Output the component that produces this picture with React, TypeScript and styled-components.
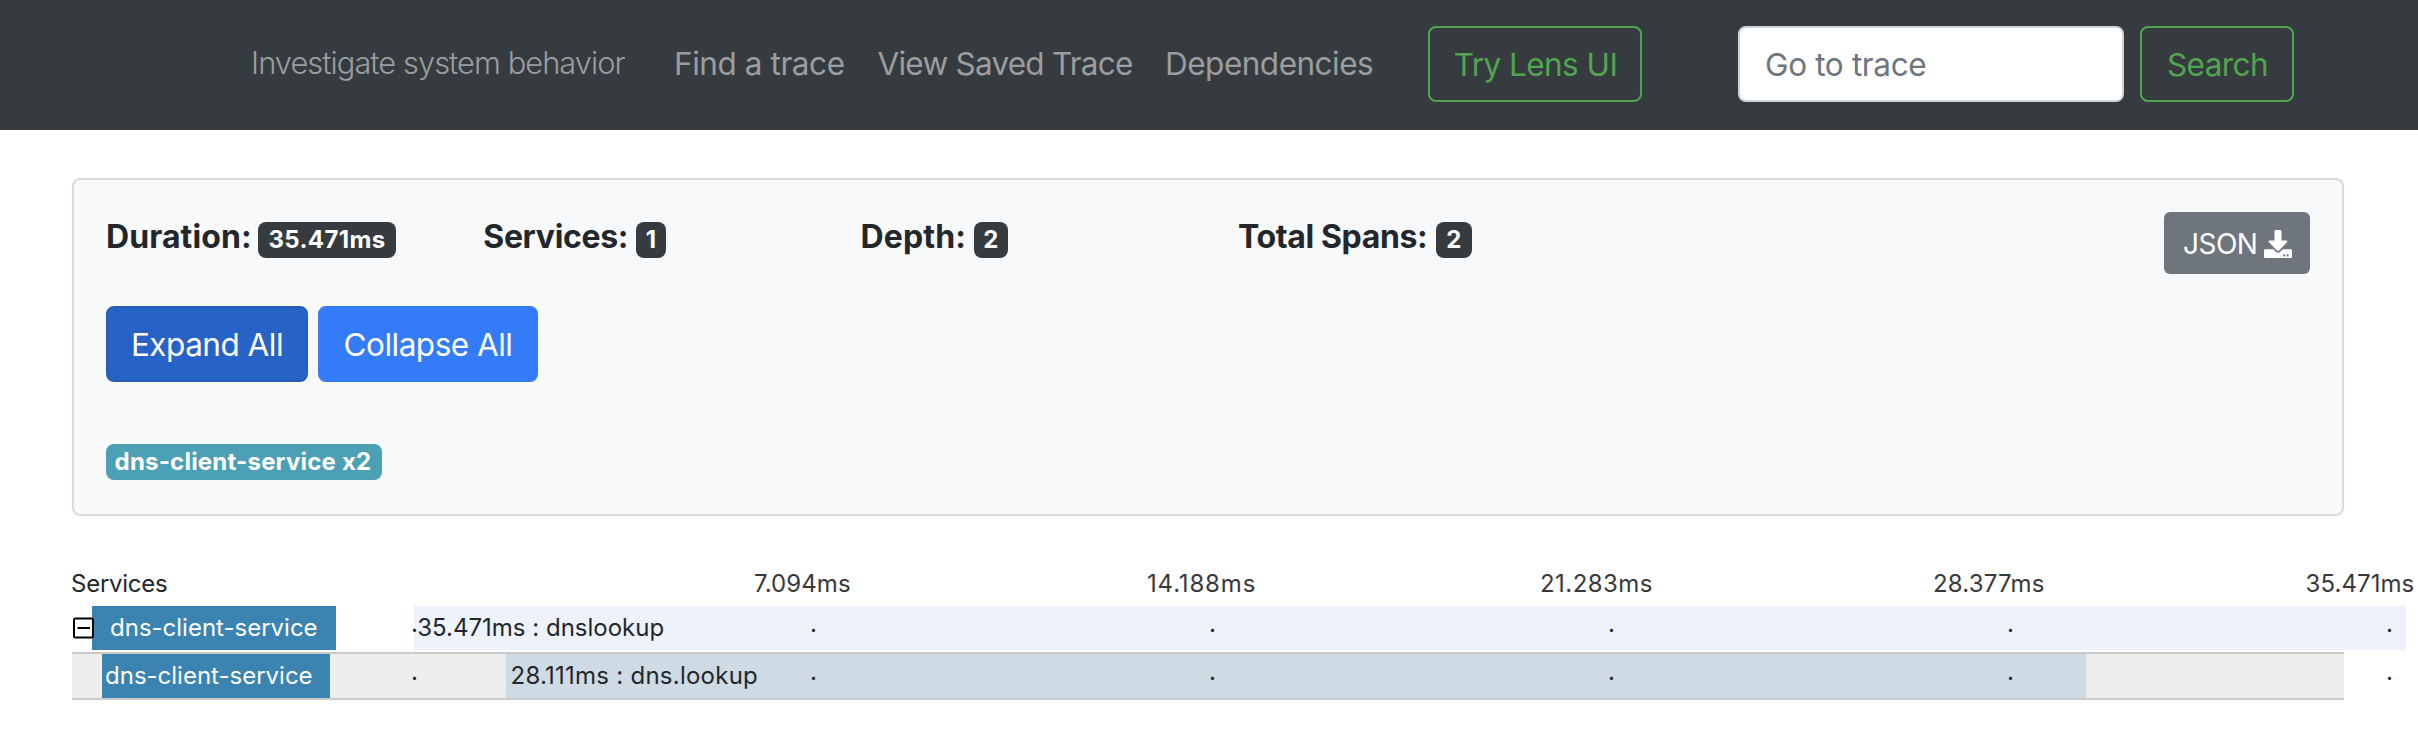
import React from 'react';
import styled, { createGlobalStyle, css } from 'styled-components';
import { FaDownload } from 'react-icons/fa';

const GlobalStyle = createGlobalStyle`
  *, *::before, *::after { box-sizing: border-box; }
  html { overflow: hidden; }
  body {
    margin: 0;
    background: #fff;
    color: #23272b;
    font-family: Inter, "Liberation Sans", sans-serif;
    font-size: 24px;
    line-height: 1;
  }
`;

const Page = styled.div`
  width: 2418px;
  height: 754px;
  overflow: hidden;
`;

/* ---------- top bar ---------- */

const Navbar = styled.header`
  display: flex;
  align-items: center;
  height: 130px;
  padding: 0 0 2px 251px;
  background: #363b3f;
`;

const Tagline = styled.span`
  width: 423px;
  padding-bottom: 1px;
  color: #9b9d9f;
  font-size: 30.8px;
  font-weight: 330;
  letter-spacing: -0.94px;
  white-space: nowrap;
`;

const NavLink = styled.a<{ $width: number; $spacing: number }>`
  width: ${(p) => p.$width}px;
  color: #9b9d9f;
  font-size: 31.5px;
  font-weight: 420;
  letter-spacing: ${(p) => p.$spacing}px;
  white-space: nowrap;
`;

const OutlineButton = styled.button<{ $width: number }>`
  width: ${(p) => p.$width}px;
  height: 76px;
  padding: 0 0 0 1px;
  border: 2px solid #53a451;
  border-radius: 8px;
  background: transparent;
  color: #53a451;
  font-family: inherit;
  font-size: 31.5px;
  font-weight: 420;
  letter-spacing: -0.55px;
`;

const TraceInput = styled.input`
  width: 386px;
  height: 76px;
  margin: 0 16px 0 96px;
  padding: 0 25px;
  border: 2px solid #ced3d9;
  border-radius: 8px;
  background: #fff;
  font-family: inherit;
  font-size: 31.5px;
  letter-spacing: -0.35px;
  &::placeholder {
    color: #6e757d;
    opacity: 1;
  }
`;

/* ---------- summary card ---------- */

const Card = styled.section`
  display: flex;
  flex-direction: column;
  align-items: flex-start;
  width: 2272px;
  height: 338px;
  margin: 48px 0 0 72px;
  padding: 32px;
  border: 2px solid #d8dadd;
  border-radius: 8px;
  background: #f8f9fb;
`;

const SummaryRow = styled.div`
  display: flex;
  align-items: flex-start;
  width: 100%;
  height: 94px;
`;

const Stat = styled.div`
  display: flex;
  align-items: center;
  width: 377.3px;
  height: 36px;
  margin-top: 10px;
`;

const StatLabel = styled.span<{ $spacing: number; $width: number }>`
  width: ${(p) => p.$width}px;
  padding-bottom: 7px;
  font-size: 32px;
  font-weight: 700;
  letter-spacing: ${(p) => p.$spacing}px;
  white-space: nowrap;
`;

const badge = css`
  display: flex;
  align-items: center;
  justify-content: center;
  height: 36px;
  border-radius: 8px;
  color: #fff;
  font-size: 24px;
  font-weight: 700;
  white-space: nowrap;
`;

const DarkBadge = styled.span<{ $width: number }>`
  ${badge}
  width: ${(p) => p.$width}px;
  padding-bottom: 1px;
  background: #363b3f;
  letter-spacing: 0.35px;
`;

const JsonButton = styled.button`
  display: flex;
  align-items: center;
  gap: 7px;
  width: 146px;
  height: 62px;
  margin-left: auto;
  padding: 1px 0 0 19px;
  border: 0;
  border-radius: 6px;
  background: #6e757d;
  color: #fff;
  font-family: inherit;
  font-size: 28px;
  font-weight: 420;
  letter-spacing: -0.5px;
  svg {
    width: 28px;
    height: 28px;
  }
`;

const ButtonRow = styled.div`
  display: flex;
  gap: 10px;
`;

const PrimaryButton = styled.button<{ $width: number; $active?: boolean }>`
  width: ${(p) => p.$width}px;
  height: 76px;
  padding: 0;
  border: 2px solid ${(p) => (p.$active ? '#235ebb' : '#347cf7')};
  border-radius: 8px;
  background: ${(p) => (p.$active ? '#2762c6' : '#347cf7')};
  color: #fff;
  font-family: inherit;
  font-size: 31.5px;
  font-weight: 420;
  letter-spacing: -0.5px;
`;

const ServiceTag = styled.span`
  ${badge}
  width: 276px;
  margin-top: 62px;
  padding: 0 2px 1px 0;
  background: #4ba0b6;
  letter-spacing: 0.2px;
`;

/* ---------- timeline ---------- */

const Timeline = styled.section`
  width: 2272px;
  margin: 57px 0 0 72px;
`;

const Ruler = styled.div`
  display: flex;
  align-items: center;
  height: 22px;
  margin-bottom: 11px;
`;

const RulerTitle = styled.span`
  flex: 0 0 683px;
  margin-left: -1px;
  letter-spacing: -0.25px;
`;

const Tick = styled.span<{ $spacing: number }>`
  flex: 0 0 393px;
  color: #38393b;
  letter-spacing: ${(p) => p.$spacing}px;
  &:last-child {
    margin-left: -20.5px;
  }
`;

const SpanRow = styled.div<{ $framed?: boolean }>`
  display: flex;
  align-items: center;
  height: 44px;
  ${(p) =>
    p.$framed &&
    css`
      height: 48px;
      margin-top: 2px;
      border: solid #cbcbcb;
      border-width: 2px 0;
      background: #eee;
    `}
`;

const Toggle = styled.svg`
  position: relative;
  z-index: 1;
  flex: none;
  width: 22px;
  height: 22px;
  margin: 0 -2px 0 0;
`;

const ServiceName = styled.div<{ $child?: boolean }>`
  display: flex;
  align-items: center;
  flex: none;
  height: 44px;
  width: ${(p) => (p.$child ? 228 : 244)}px;
  margin-left: ${(p) => (p.$child ? 30 : 0)}px;
  margin-right: ${(p) => (p.$child ? 84 : 78)}px;
  padding-left: ${(p) => (p.$child ? 3 : 18)}px;
  background: #3b83b1;
  color: #fff;
  font-weight: 420;
`;

const Lane = styled.div`
  position: relative;
  flex: 0 0 1992px;
  height: 44px;
`;

const Bar = styled.div<{ $start: number; $length: number; $tone: string; $indent: number; $spacing: number }>`
  display: flex;
  align-items: center;
  height: 44px;
  width: ${(p) => p.$length}%;
  margin-left: ${(p) => p.$start}%;
  padding-left: ${(p) => p.$indent}px;
  background: ${(p) => p.$tone};
  letter-spacing: ${(p) => p.$spacing}px;
  white-space: nowrap;
`;

const Markers = styled.div`
  position: absolute;
  inset: -9px 0 0 -3px;
  display: flex;
  align-items: center;
`;

const Marker = styled.span`
  flex: 0 0 20%;
  &:last-child {
    margin-left: -20px;
  }
`;

const ticks = [
  { label: '7.094ms', spacing: 0.08 },
  { label: '14.188ms', spacing: 0.84 },
  { label: '21.283ms', spacing: 0.45 },
  { label: '28.377ms', spacing: 0.17 },
  { label: '35.471ms', spacing: 0.08 },
];

const stats = [
  { label: 'Duration:', value: '35.471ms', labelWidth: 152, spacing: 0.1, badgeWidth: 138 },
  { label: 'Services:', value: '1', labelWidth: 152.7, spacing: -0.35, badgeWidth: 30 },
  { label: 'Depth:', value: '2', labelWidth: 113.4, spacing: 0.1, badgeWidth: 34 },
  { label: 'Total Spans:', value: '2', labelWidth: 198, spacing: -0.35, badgeWidth: 36 },
];

const LaneMarkers = () => (
  <Markers>
    {[0, 1, 2, 3, 4, 5].map((i) => (
      <Marker key={i}>.</Marker>
    ))}
  </Markers>
);

export default function App() {
  return (
    <Page>
      <GlobalStyle />
      <Navbar>
        <Tagline>Investigate system behavior</Tagline>
        <NavLink $width={203.5} $spacing={-0.43}>Find a trace</NavLink>
        <NavLink $width={287.5} $spacing={-0.76}>View Saved Trace</NavLink>
        <NavLink $width={263} $spacing={-0.5}>Dependencies</NavLink>
        <OutlineButton $width={214}>Try Lens UI</OutlineButton>
        <TraceInput placeholder="Go to trace" />
        <OutlineButton $width={154}>Search</OutlineButton>
      </Navbar>

      <Card>
        <SummaryRow>
          {stats.map((s) => (
            <Stat key={s.label}>
              <StatLabel $width={s.labelWidth} $spacing={s.spacing}>{s.label}</StatLabel>
              <DarkBadge $width={s.badgeWidth}>{s.value}</DarkBadge>
            </Stat>
          ))}
          <JsonButton>
            JSON <FaDownload />
          </JsonButton>
        </SummaryRow>
        <ButtonRow>
          <PrimaryButton $width={202} $active>Expand All</PrimaryButton>
          <PrimaryButton $width={220}>Collapse All</PrimaryButton>
        </ButtonRow>
        <ServiceTag>dns-client-service x2</ServiceTag>
      </Card>

      <Timeline>
        <Ruler>
          <RulerTitle>Services</RulerTitle>
          {ticks.map((t) => (
            <Tick key={t.label} $spacing={t.spacing}>{t.label}</Tick>
          ))}
        </Ruler>
        <SpanRow>
          <Toggle viewBox="0 0 22 22" fill="none" stroke="#000" strokeWidth="2">
            <rect x="2" y="1.5" width="19" height="19" rx="1.5" />
            <path d="M5.5 11H18" />
          </Toggle>
          <ServiceName>dns-client-service</ServiceName>
          <Lane>
            <Bar $start={0} $length={100} $tone="#eef2fb" $indent={3.3} $spacing={0}>
              35.471ms : dnslookup
            </Bar>
            <LaneMarkers />
          </Lane>
        </SpanRow>
        <SpanRow $framed>
          <ServiceName $child>dns-client-service</ServiceName>
          <Lane>
            <Bar $start={4.62} $length={79.32} $tone="#cfdbe4" $indent={4.5} $spacing={0.25}>
              28.111ms : dns.lookup
            </Bar>
            <LaneMarkers />
          </Lane>
        </SpanRow>
      </Timeline>
    </Page>
  );
}
